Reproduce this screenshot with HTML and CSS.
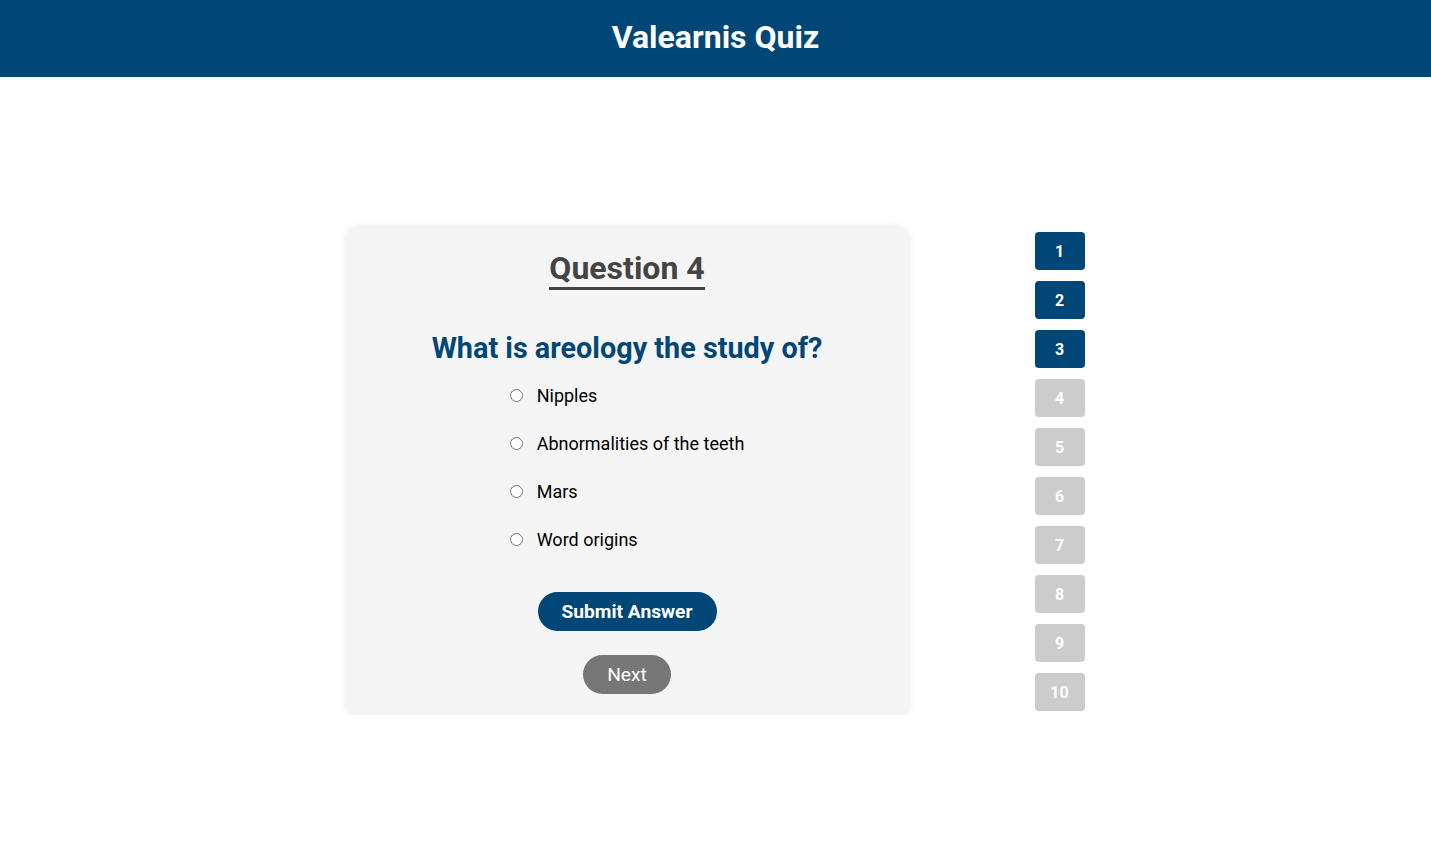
FILE: index.html
```html
<!DOCTYPE html>
<html lang="en">
<head>
<meta charset="utf-8">
<title>Valearnis Quiz</title>
<link rel="stylesheet" href="styles.css">
</head>
<body>
<header class="topbar">
  <h1 class="brand">Valearnis Quiz</h1>
</header>
<main class="layout">
  <section class="card">
    <h2 class="q-number">Question 4</h2>
    <h3 class="q-text">What is areology the study of?</h3>
    <div class="options">
      <label class="option"><input type="radio" name="answer"><span>Nipples</span></label>
      <label class="option"><input type="radio" name="answer"><span>Abnormalities of the teeth</span></label>
      <label class="option"><input type="radio" name="answer"><span>Mars</span></label>
      <label class="option"><input type="radio" name="answer"><span>Word origins</span></label>
    </div>
    <div class="actions">
      <button class="btn btn-submit">Submit Answer</button>
      <button class="btn btn-next">Next</button>
    </div>
  </section>
  <nav class="qnav">
    <button class="qbtn done">1</button>
    <button class="qbtn done">2</button>
    <button class="qbtn done">3</button>
    <button class="qbtn">4</button>
    <button class="qbtn">5</button>
    <button class="qbtn">6</button>
    <button class="qbtn">7</button>
    <button class="qbtn">8</button>
    <button class="qbtn">9</button>
    <button class="qbtn">10</button>
  </nav>
</main>
</body>
</html>
```
FILE: styles.css
```css
* { box-sizing: border-box; }
html, body { margin: 0; padding: 0; }
body {
  font-family: Roboto, "Liberation Sans", Arial, sans-serif;
  background: #fff;
  color: #000;
}
.topbar {
  background: #004777;
  height: 77px;
  padding-bottom: 4px;
  display: flex;
  align-items: center;
  justify-content: center;
}
.brand {
  margin: 0;
  color: #fff;
  font-size: 32px;
  font-weight: 700;
  line-height: 1;
}
.layout {
  display: flex;
  justify-content: center;
  align-items: flex-start;
  gap: 127px;
  padding-top: 150px;
}
.card {
  width: 561px;
  background: #f5f5f5;
  border-radius: 10px;
  box-shadow: 0 0 10px rgba(0, 0, 0, 0.1);
  padding: 22px 20px 21px;
  text-align: center;
}
.q-number {
  display: inline-block;
  margin: 0;
  font-size: 32px;
  font-weight: 700;
  color: #444;
  border-bottom: 3px solid #444;
}
.q-text {
  margin: 41px 0 0;
  font-size: 28.8px;
  font-weight: 700;
  color: #004777;
}
.options {
  display: inline-flex;
  flex-direction: column;
  align-items: flex-start;
  gap: 27px;
  margin-top: 20px;
  text-align: left;
}
.option {
  display: flex;
  align-items: center;
  font-size: 18px;
  line-height: 21px;
  cursor: pointer;
}
.option input {
  margin: 0 14px 0 0;
  width: 13px;
  height: 13px;
}
.actions {
  display: flex;
  flex-direction: column;
  align-items: center;
  gap: 24px;
  margin-top: 42px;
}
.btn {
  border: none;
  border-radius: 20px;
  height: 39px;
  color: #fff;
  font-family: inherit;
  cursor: pointer;
}
.btn-submit {
  background: #004777;
  font-size: 19.2px;
  font-weight: 700;
  padding: 0 24px;
}
.btn-next {
  background: #777;
  font-size: 19.2px;
  padding: 0 24px;
}
.qnav {
  display: flex;
  flex-direction: column;
  gap: 11px;
  margin-top: 5px;
}
.qbtn {
  width: 50px;
  height: 38px;
  border: none;
  border-radius: 4px;
  background: #ccc;
  color: #fff;
  font-family: inherit;
  font-size: 16px;
  font-weight: 700;
}
.qbtn.done { background: #004777; }
```
